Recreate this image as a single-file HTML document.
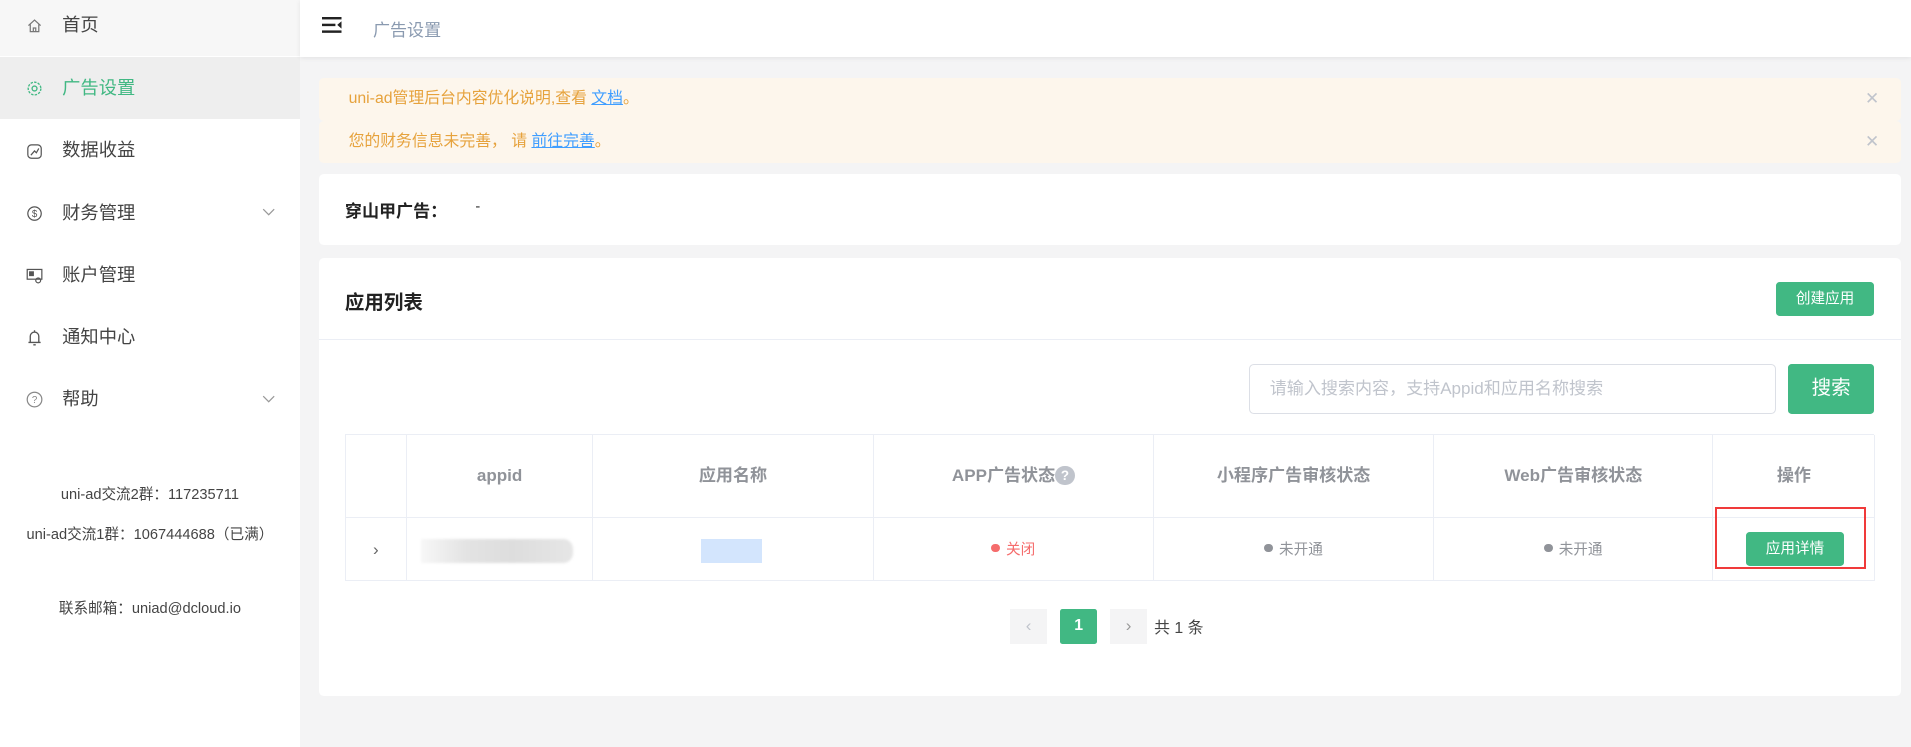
<!DOCTYPE html>
<html><head><meta charset="utf-8">
<style>
*{margin:0;padding:0;box-sizing:border-box}
html,body{width:1911px;height:747px;overflow:hidden;background:#f4f4f5}
body{font-family:"Liberation Sans","Noto Sans CJK SC",sans-serif}
#r{zoom:1.21875;width:1568px;height:613px;position:relative;background:#f4f4f5}
.abs{position:absolute}
.side{left:0;top:0;width:246px;height:613px;background:#fff}
.item{position:absolute;left:0;width:246px;height:51px;font-size:15px;color:#444;line-height:51px}
.item .t{position:absolute;left:51px;top:0}
.item svg{position:absolute;left:21px;top:19px}
.item .ar{position:absolute;left:215px;top:22px}
.note{position:absolute;left:0;width:246px;text-align:center;font-size:12px;color:#444}
.hdr{left:246px;top:0;width:1322px;height:47px;background:#fff;box-shadow:0 1px 4px rgba(0,0,0,.08)}
.alert{left:262px;width:1298px;height:35px;background:#fdf6ec;border-radius:4px;font-size:13px;color:#e6a23c;line-height:35px;padding-left:24px}
.alert a{color:#409eff;text-decoration:underline}
.alert .x{position:absolute;right:18px;top:0;color:#c0c4cc;font-size:14px}
.card{left:262px;width:1298px;background:#fff;border-radius:4px}
.btn{background:#41b883;color:#fff;border-radius:3px;text-align:center}
.th,.td{position:absolute;text-align:center;border-right:1px solid #ebeef5}
.th{top:0;height:67px;line-height:67px;font-size:14px;font-weight:bold;color:#909399}
.td{top:67px;height:53px;line-height:53px;font-size:12px;color:#909399;border-top:1px solid #ebeef5}
.dot{display:inline-block;width:7px;height:7px;border-radius:50%;margin-right:5px;vertical-align:1px}
</style></head><body><div id="r">
<div class="abs side">
 <div class="item" style="top:-5px;background:#f7f7f7"><svg width="14" height="14" viewBox="0 0 14 14" fill="none" stroke="#777" stroke-width="1"><path d="M2 7L7 2.5L12 7M3.5 6v6h7V6M6 12V9h2v3"/></svg><span class="t">首页</span></div>
 <div class="item" style="top:47px;background:#eee;color:#41b883"><svg width="14" height="14" viewBox="0 0 14 14" fill="none" stroke="#41b883" stroke-width="1.1"><circle cx="7" cy="7" r="5.2" stroke-dasharray="2 1"/><circle cx="7" cy="7" r="2"/></svg><span class="t">广告设置</span></div>
 <div class="item" style="top:98px"><svg width="14" height="14" viewBox="0 0 14 14" fill="none" stroke="#555" stroke-width="1"><rect x="1.5" y="1.5" width="11" height="11" rx="3"/><path d="M4 10L7 6.5L8.5 8L10.5 4.5"/></svg><span class="t">数据收益</span></div>
 <div class="item" style="top:149px"><svg width="14" height="14" viewBox="0 0 14 14" fill="none" stroke="#555" stroke-width="1"><circle cx="7" cy="7" r="5.5"/><text x="7" y="10" font-size="8" text-anchor="middle" fill="#555" stroke="none">$</text></svg><span class="t">财务管理</span><svg class="ar" width="11" height="7" viewBox="0 0 11 7" fill="none" stroke="#999"><path d="M1 1l4.5 4.5L10 1"/></svg></div>
 <div class="item" style="top:200px"><svg width="14" height="14" viewBox="0 0 14 14" fill="none" stroke="#555" stroke-width="1"><rect x="1" y="2" width="12" height="8"/><rect x="3" y="4" width="3" height="3" fill="#555"/><circle cx="10" cy="11" r="2"/></svg><span class="t">账户管理</span></div>
 <div class="item" style="top:251px"><svg width="14" height="14" viewBox="0 0 14 14" fill="none" stroke="#555" stroke-width="1.1"><path d="M3.5 11V6a3.5 3.5 0 017 0v5M2 11h10M6 13h2M7 1v1.5"/></svg><span class="t">通知中心</span></div>
 <div class="item" style="top:302px"><svg width="14" height="14" viewBox="0 0 14 14" fill="none" stroke="#888" stroke-width="1"><circle cx="7" cy="7" r="6"/><text x="7" y="10" font-size="8" text-anchor="middle" fill="#888" stroke="none">?</text></svg><span class="t">帮助</span><svg class="ar" width="11" height="7" viewBox="0 0 11 7" fill="none" stroke="#999"><path d="M1 1l4.5 4.5L10 1"/></svg></div>
 <div class="note" style="top:396px">uni-ad交流2群：117235711</div>
 <div class="note" style="top:429px">uni-ad交流1群：1067444688（已满）</div>
 <div class="note" style="top:490px">联系邮箱：uniad@dcloud.io</div>
</div>
<div class="abs hdr">
 <svg class="abs" style="left:18px;top:14px" width="17" height="13" viewBox="0 0 17 13" fill="#222"><rect x="0" y="0" width="16" height="2"/><rect x="0" y="5.5" width="11" height="2"/><rect x="0" y="11" width="16" height="2"/><path d="M16 3.5L12.5 6.5L16 9.5z"/></svg>
 <div class="abs" style="left:60px;top:13px;font-size:14px;color:#8a9ab0">广告设置</div>
</div>
<div class="abs alert" style="top:64px">uni-ad管理后台内容优化说明,查看 <a>文档</a>。<span class="x">✕</span></div>
<div class="abs alert" style="top:99px">您的财务信息未完善， 请 <a>前往完善</a>。<span class="x">✕</span></div>
<div class="abs card" style="top:143px;height:58px">
 <div class="abs" style="left:21px;top:19px;font-size:14px;font-weight:bold;color:#222">穿山甲广告：</div>
 <div class="abs" style="left:128px;top:20px;font-size:12px;color:#333">-</div>
</div>
<div class="abs card" style="top:212px;height:359px">
 <div class="abs" style="left:21px;top:23px;font-size:16px;font-weight:bold;color:#222">应用列表</div>
 <div class="abs btn" style="left:1195px;top:19px;width:81px;height:28px;line-height:28px;font-size:12px">创建应用</div>
 <div class="abs" style="left:0;top:66px;width:1298px;height:1px;background:#ebeef5"></div>
 <div class="abs" style="left:763px;top:87px;width:432px;height:41px;border:1px solid #dcdfe6;border-radius:4px;font-size:14px;color:#c0c4cc;line-height:39px;padding-left:16px">请输入搜索内容，支持Appid和应用名称搜索</div>
 <div class="abs btn" style="left:1205px;top:87px;width:71px;height:41px;line-height:41px;font-size:16px">搜索</div>
 <div class="abs" style="left:21px;top:144px;width:1255px;height:121px;border:1px solid #ebeef5;border-right:none">
  <div class="th" style="left:0;width:50px"></div>
  <div class="th" style="left:50px;width:153px">appid</div>
  <div class="th" style="left:203px;width:230px">应用名称</div>
  <div class="th" style="left:433px;width:230px">APP广告状态<span style="display:inline-block;width:16px;height:16px;border-radius:50%;background:#c0c4cc;color:#fff;font-size:11px;line-height:16px;vertical-align:1px">?</span></div>
  <div class="th" style="left:663px;width:230px">小程序广告审核状态</div>
  <div class="th" style="left:893px;width:229px">Web广告审核状态</div>
  <div class="th" style="left:1122px;width:133px">操作</div>
  <div class="td" style="left:0;width:50px;font-size:14px;color:#666">›</div>
  <div class="td" style="left:50px;width:153px"><span style="position:absolute;left:12px;top:18px;width:124px;height:19px;background:linear-gradient(90deg,#f7f7f7,#e3e3e3 30%,#ddd 60%,#e6e6e6);border-radius:0 8px 8px 0;filter:blur(1px)"></span></div>
  <div class="td" style="left:203px;width:230px"><span style="position:absolute;left:88px;top:18px;width:50px;height:19px;background:#d3e5fd"></span></div>
  <div class="td" style="left:433px;width:230px;color:#f56c6c"><span class="dot" style="background:#f56c6c"></span>关闭</div>
  <div class="td" style="left:663px;width:230px"><span class="dot" style="background:#909399"></span>未开通</div>
  <div class="td" style="left:893px;width:229px"><span class="dot" style="background:#909399"></span>未开通</div>
  <div class="td" style="left:1122px;width:133px;border-right:1px solid #ebeef5">
   <div class="abs btn" style="left:27px;top:12px;width:80px;height:28px;line-height:28px;font-size:12px">应用详情</div>
  </div>
 </div>
 <div class="abs" style="left:1145px;top:204px;width:124px;height:51px;border:2px solid #f03a3a"></div>
 <div class="abs" style="left:567px;top:288px;width:30px;height:28px;background:#f4f4f5;color:#c0c4cc;text-align:center;line-height:28px;font-size:14px">‹</div>
 <div class="abs" style="left:608px;top:288px;width:30px;height:28px;background:#41b883;color:#fff;text-align:center;line-height:28px;font-size:13px;font-weight:bold;border-radius:2px">1</div>
 <div class="abs" style="left:649px;top:288px;width:30px;height:28px;background:#f4f4f5;color:#999;text-align:center;line-height:28px;font-size:14px">›</div>
 <div class="abs" style="left:685px;top:293px;font-size:13px;color:#444">共 1 条</div>
</div>
</div></body></html>
